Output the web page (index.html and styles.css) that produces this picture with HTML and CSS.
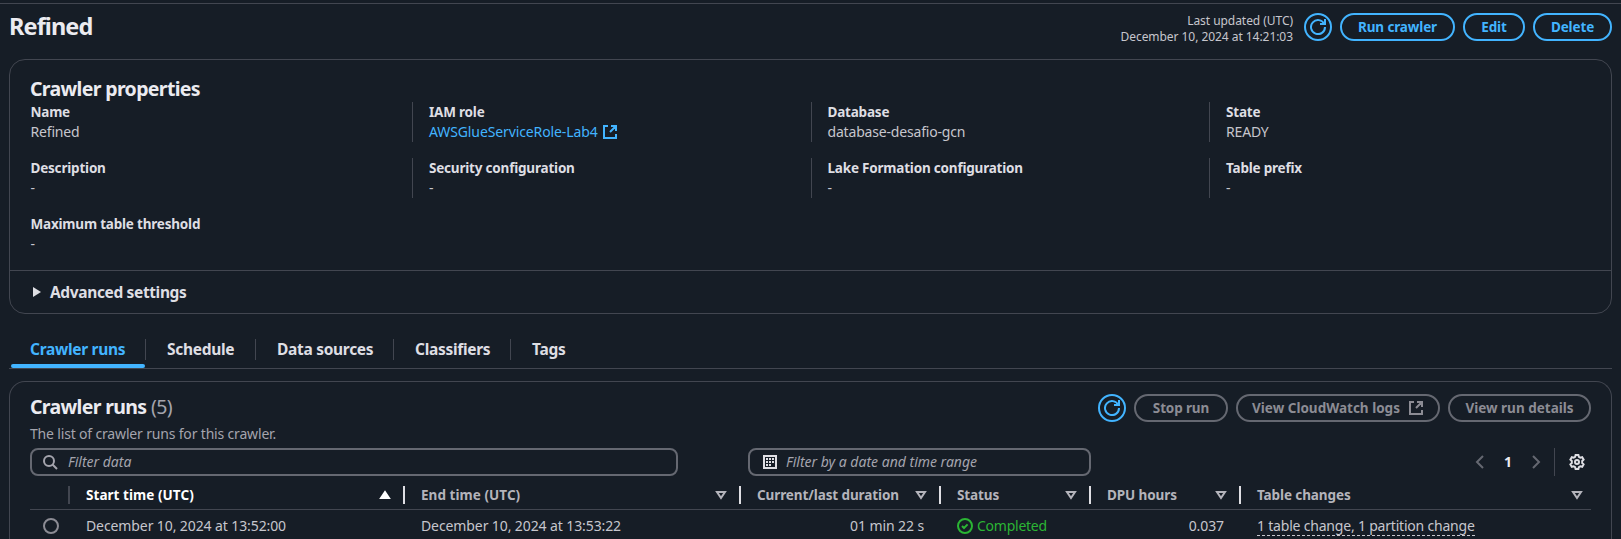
FILE: index.html
```html
<!DOCTYPE html>
<html lang="en">
<head>
<meta charset="utf-8">
<title>Refined</title>
<link rel="stylesheet" href="styles.css">
</head>
<body>
<svg width="0" height="0" class="defs">
  <symbol id="refresh" viewBox="0 0 16 16"><path d="M10 5h5V0"/><path d="M15 8a7 7 0 1 1-.7-3"/></symbol>
  <symbol id="external" viewBox="0 0 16 16"><path d="M9 2h5v5M8 8l6-6M14 10v4H2V2h4"/></symbol>
  <symbol id="sort" viewBox="0 0 16 16"><path d="M4 5h8l-4 6z"/></symbol>
</svg>
<main class="page">
  <header class="page-head">
    <h1>Refined</h1>
    <div class="actions">
      <p class="updated"><span>Last updated (UTC)</span><span>December 10, 2024 at 14:21:03</span></p>
      <button class="btn round"><svg class="icon"><use href="#refresh"/></svg></button>
      <button class="btn w-run">Run crawler</button>
      <button class="btn w-edit">Edit</button>
      <button class="btn w-delete">Delete</button>
    </div>
  </header>

  <section class="card props">
    <h2>Crawler properties</h2>
    <dl class="grid">
      <div><dt>Name</dt><dd>Refined</dd></div>
      <div><dt>IAM role</dt><dd><a class="link">AWSGlueServiceRole-Lab4</a><svg class="icon ext"><use href="#external"/></svg></dd></div>
      <div><dt>Database</dt><dd>database-desafio-gcn</dd></div>
      <div><dt>State</dt><dd>READY</dd></div>
      <div><dt>Description</dt><dd>-</dd></div>
      <div><dt>Security configuration</dt><dd>-</dd></div>
      <div><dt>Lake Formation configuration</dt><dd>-</dd></div>
      <div><dt>Table prefix</dt><dd>-</dd></div>
      <div><dt>Maximum table threshold</dt><dd>-</dd></div>
    </dl>
    <div class="advanced"><svg class="caret" viewBox="0 0 8 10"><path d="M0 0l8 5-8 5z"/></svg>Advanced settings</div>
  </section>

  <nav class="tabs">
    <a class="tab active t1">Crawler runs</a>
    <a class="tab t2">Schedule</a>
    <a class="tab t3">Data sources</a>
    <a class="tab t4">Classifiers</a>
    <a class="tab t5">Tags</a>
  </nav>

  <section class="card runs">
    <div class="runs-head">
      <div>
        <h2>Crawler runs <span class="count">(5)</span></h2>
        <p class="desc">The list of crawler runs for this crawler.</p>
      </div>
      <div class="actions">
        <button class="btn round"><svg class="icon"><use href="#refresh"/></svg></button>
        <button class="btn off w-stop">Stop run</button>
        <button class="btn off w-logs">View CloudWatch logs<svg class="icon"><use href="#external"/></svg></button>
        <button class="btn off w-details">View run details</button>
      </div>
    </div>
    <div class="filters">
      <div class="input search"><svg class="icon"><circle cx="7" cy="7" r="5"/><path d="M10.5 10.5L15 15"/></svg><span>Filter data</span></div>
      <div class="input date"><svg class="icon cal" viewBox="0 0 16 16"><path class="frame" d="M2 2h12v12H2z"/><path d="M4 4h2v2H4zM7 4h2v2H7zM10 4h2v2h-2zM4 7h2v2H4zM7 7h2v2H7zM10 7h2v2h-2zM4 10h2v2H4zM7 10h2v2H7z"/></svg><span>Filter by a date and time range</span></div>
      <div class="pager">
        <svg class="icon dim"><path d="M11 2L5 8l6 6"/></svg>
        <b>1</b>
        <svg class="icon dim"><path d="M5 2l6 6-6 6"/></svg>
      </div>
      <div class="prefs"><svg class="icon"><path d="M6.6 1h2.8l.5 1.9 1.4.8 1.9-.5 1.4 2.4L13.200 7v2l1.400 1.400-1.400 2.400-1.900-.500-1.400.800L9.400 15H6.600l-.500-1.900-1.400-.800-1.900.500-1.400-2.400L2.800 9V7L1.400 5.600l1.400-2.400 1.900.500 1.400-.800z"/><circle cx="8" cy="8" r="2"/></svg></div>
    </div>
    <div class="table">
      <div class="tr th">
        <span></span>
        <span class="sorted">Start time (UTC)<svg class="icon"><path class="fill" d="M4 11h8L8 5z"/></svg></span>
        <span>End time (UTC)<svg class="icon"><use href="#sort"/></svg></span>
        <span>Current/last duration<svg class="icon"><use href="#sort"/></svg></span>
        <span>Status<svg class="icon"><use href="#sort"/></svg></span>
        <span>DPU hours<svg class="icon"><use href="#sort"/></svg></span>
        <span>Table changes<svg class="icon"><use href="#sort"/></svg></span>
      </div>
      <div class="tr td">
        <span class="pick"><i class="radio"></i></span>
        <span>December 10, 2024 at 13:52:00</span>
        <span>December 10, 2024 at 13:53:22</span>
        <span class="num">01 min 22 s</span>
        <span class="ok"><svg class="icon"><circle cx="8" cy="8" r="7"/><path d="M5 8l2 2 3.600-3.600"/></svg>Completed</span>
        <span class="num">0.037</span>
        <span><u>1 table change, 1 partition change</u></span>
      </div>
    </div>
  </section>
</main>
</body>
</html>
```
FILE: styles.css
```css
* { box-sizing: border-box; margin: 0; padding: 0; }
body {
  height: 539px;
  overflow: hidden;
  background: #161d26;
  color: #c6c6cd;
  font: 14px/20px "Noto Sans", "Open Sans", sans-serif;
  letter-spacing: -0.1px;
  white-space: nowrap;
}
.defs { position: absolute; }
.page { margin-top: 3px; border-top: 1px solid #424650; padding: 9px 9px 0; }
.icon { width: 16px; height: 16px; flex: none; fill: none; stroke: currentColor; stroke-width: 2; overflow: visible; }
h1, h2 { color: #ebebf0; font-weight: 700; }
h1 { font-size: 23.5px; line-height: 27px; letter-spacing: -0.9px; }
h2 { font-size: 19.5px; line-height: 24px; letter-spacing: -0.65px; }

.page-head { display: flex; justify-content: space-between; height: 46px; }
.actions { display: flex; gap: 8px; }
.updated { display: flex; flex-direction: column; align-items: flex-end; font-size: 12px; line-height: 16px; margin-right: 3px; letter-spacing: -0.05px; }
.btn {
  height: 28px; border: 2px solid currentColor; border-radius: 20px; background: none;
  color: #42b4ff; font: inherit; font-size: 13.5px; font-weight: 700; letter-spacing: -0.13px;
  display: flex; align-items: center; justify-content: center; flex: none;
}
.round { width: 28px; border-radius: 50%; }
.w-run { width: 115px; }
.w-edit { width: 62px; }
.w-delete { width: 79px; }
.w-stop { width: 94px; }
.w-logs { width: 204px; gap: 8px; letter-spacing: 0; }
.w-details { width: 143px; letter-spacing: 0; }
.off { color: #8c8c94; border-color: #656871; }

.card { border: 1px solid #424650; border-radius: 16px; }
.props { height: 255px; padding-top: 17px; }
.props h2 { padding-left: 20px; }
.grid { display: grid; grid-template-columns: repeat(4, 398.500px); row-gap: 16px; padding: 1px 0 0 3.500px; height: 169px; align-content: start; }
.grid > div { height: 40px; padding-left: 16px; border-left: 1px solid #424650; }
.grid > div:nth-child(4n + 1) { border-color: transparent; }
dt { color: #dedee3; font-size: 13.5px; font-weight: 700; letter-spacing: -0.2px; }
.link { color: #42b4ff; letter-spacing: -0.11px; }
dd { display: flex; align-items: center; gap: 4px; letter-spacing: -0.18px; }
.ext { color: #42b4ff; }
.advanced { display: flex; align-items: center; gap: 9px; height: 42px; border-top: 1px solid #424650; padding-left: 23px; color: #dedee3; font-size: 15.5px; font-weight: 700; letter-spacing: -0.36px; }
.caret { width: 8px; height: 10px; fill: currentColor; }

.tabs { display: flex; height: 44px; margin: 11px 0 12px; border-bottom: 1px solid #424650; }
.tab { position: relative; padding: 14px 0 0 21px; color: #dedee3; font-size: 15.5px; font-weight: 700; letter-spacing: -0.3px; }
.tab:not(:last-child) { border-right: 1px solid #424650; border-image: linear-gradient(#161d26 14px, #424650 14px 34px, #161d26 34px) 1; }
.t1 { width: 137px; }
.t2 { width: 110px; }
.t3 { width: 138px; }
.t4 { width: 117px; }
.active { color: #42b4ff; }
.active::after { content: ""; position: absolute; left: 2px; right: 0; bottom: 0; height: 4px; border-radius: 2px; background: #42b4ff; }

.runs { height: 180px; padding: 12px 20px 0; border-bottom: 0; border-radius: 16px 16px 0 0; }
.runs-head { display: flex; justify-content: space-between; height: 54px; }
.runs-head h2 { padding-top: 1px; }
.count { color: #a4a4ad; font-weight: 400; }
.desc { color: #a4a4ad; margin-top: 5px; letter-spacing: -0.17px; }
.filters { display: flex; height: 28px; }
.input { display: flex; align-items: center; border: 2px solid #656871; border-radius: 8px; color: #a4a4ad; font-style: italic; letter-spacing: 0; }
.search { width: 648px; padding-left: 10px; gap: 10px; }
.date { width: 343px; margin-left: 70px; padding-left: 12px; gap: 8px; }
.cal { color: #dedee3; fill: currentColor; stroke: none; }
.frame { fill: none; stroke: currentColor; }
.pager { display: flex; align-items: center; margin-left: auto; gap: 8px; color: #ebebf0; }
.pager b { width: 24px; text-align: center; }
.dim { color: #656871; }
.prefs { display: flex; align-items: center; margin-left: 10px; border-left: 1px solid #424650; padding: 0 6px 0 14px; color: #dedee3; }

.tr { display: grid; grid-template-columns: 40px 335px 336px 200px 150px 150px 350px; }
.th { height: 34px; border-bottom: 1px solid #424650; padding-top: 10px; color: #b4b4bb; font-size: 13.5px; font-weight: 700; }
.th span { display: flex; align-items: center; justify-content: space-between; height: 18px; border-right: 2px solid #dedee3; padding: 0 10px 0 16px; }
.th span:first-child { border-color: #424650; }
.th span:last-child { border: 0; padding-right: 6px; }
.th .sorted, .th span:nth-child(3) { letter-spacing: 0.05px; }
.th .sorted { color: #fff; }
.icon .fill { fill: currentColor; }
.td { padding-top: 6px; }
.td span { padding: 0 16px; }
.td .pick { padding: 0 0 0 13px; display: flex; align-items: center; }
.radio { flex: none; width: 16px; height: 16px; border: 2px solid #8c8c94; border-radius: 50%; }
.td .num { text-align: right; padding-right: 17px; }
.ok { display: flex; align-items: center; gap: 4px; color: #2bb534; letter-spacing: -0.25px; }
u { text-decoration: none; border-bottom: 1px dashed currentColor; letter-spacing: -0.2px; }
```
